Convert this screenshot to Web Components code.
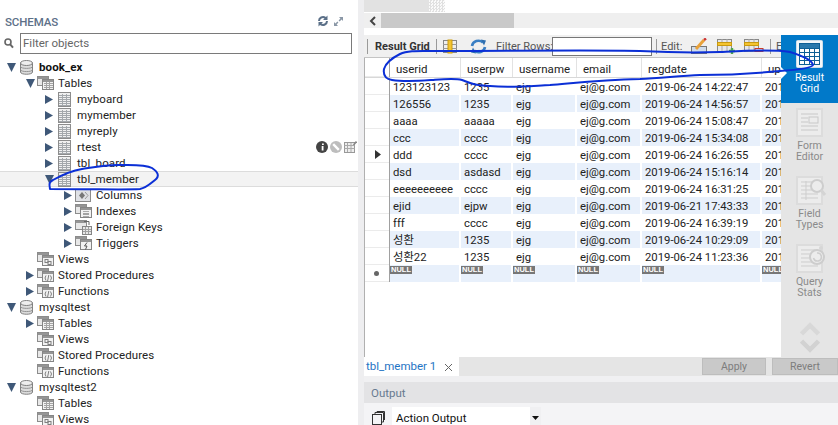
<!DOCTYPE html>
<html>
<head>
<meta charset="utf-8">
<title>MySQL Workbench</title>
<style>
  html, body { margin: 0; padding: 0; height: 425px; overflow: hidden; background: #fff; }
  body { font: 11.5px Roboto, "Noto Sans CJK KR", sans-serif; color: #111; }
</style>
</head>
<body>
<wb-app>
  <schema-panel slot="left">
    <tree-row arrow="open" icon="db" bold>book_ex</tree-row>
    <tree-row level="1" arrow="open" icon="tables">Tables</tree-row>
    <tree-row level="2" arrow="closed" icon="table">myboard</tree-row>
    <tree-row level="2" arrow="closed" icon="table">mymember</tree-row>
    <tree-row level="2" arrow="closed" icon="table">myreply</tree-row>
    <tree-row level="2" arrow="closed" icon="table" actions>rtest</tree-row>
    <tree-row level="2" arrow="closed" icon="table">tbl_board</tree-row>
    <tree-row level="2" arrow="open" icon="table" selected>tbl_member</tree-row>
    <tree-row level="3" arrow="closed" icon="columns">Columns</tree-row>
    <tree-row level="3" arrow="closed" icon="indexes">Indexes</tree-row>
    <tree-row level="3" arrow="closed" icon="fkeys">Foreign Keys</tree-row>
    <tree-row level="3" arrow="closed" icon="triggers">Triggers</tree-row>
    <tree-row level="1" icon="views">Views</tree-row>
    <tree-row level="1" arrow="closed" icon="procs">Stored Procedures</tree-row>
    <tree-row level="1" arrow="closed" icon="procs">Functions</tree-row>
    <tree-row arrow="open" icon="db">mysqltest</tree-row>
    <tree-row level="1" arrow="closed" icon="tables">Tables</tree-row>
    <tree-row level="1" icon="views">Views</tree-row>
    <tree-row level="1" icon="procs">Stored Procedures</tree-row>
    <tree-row level="1" icon="procs">Functions</tree-row>
    <tree-row arrow="open" icon="db">mysqltest2</tree-row>
    <tree-row level="1" icon="tables">Tables</tree-row>
    <tree-row level="1" icon="views">Views</tree-row>
  </schema-panel>
  <query-panel slot="right">
    <grid-toolbar slot="toolbar"></grid-toolbar>
    <data-grid slot="grid"></data-grid>
    <side-tabs slot="side">
      <side-tab icon="result" active>Result<br>Grid</side-tab>
      <side-tab icon="form">Form<br>Editor</side-tab>
      <side-tab icon="field">Field<br>Types</side-tab>
      <side-tab icon="stats">Query<br>Stats</side-tab>
    </side-tabs>
    <output-panel slot="output"></output-panel>
  </query-panel>
  <ink-marks slot="ink"></ink-marks>
</wb-app>

<script>
const TREE_ICONS = (() => {
  const back = '<rect x="0.5" y="0.5" width="11" height="9" fill="#e8e8e8" stroke="#8c8c8c"/><rect x="1" y="1" width="10" height="2" fill="#959595"/>';
  const front = '<rect x="5.5" y="3.5" width="11" height="10" fill="#f2f2f2" stroke="#858585"/><rect x="6" y="4" width="10" height="2" fill="#959595"/>';
  const stack = inner => `<svg width="17" height="15" viewBox="0 0 17 15">${back}${front}${inner}</svg>`;
  const tableLines = [3, 5, 7, 9, 11, 13].map(y => `M1 ${y + 0.5}H12`).join('') + 'M4.5 2V14M8.5 2V14';
  return {
    db: `<svg width="13" height="15" viewBox="0 0 13 15"><path d="M0.5 3V12C0.5 15 12.5 15 12.5 12V3Z" fill="#dcdcdc" stroke="#808080"/><ellipse cx="6.5" cy="3" rx="6" ry="2.5" fill="#eee" stroke="#808080"/><path d="M0.5 6.5C0.5 9 12.5 9 12.5 6.5M0.5 9.7C0.5 12.2 12.5 12.2 12.5 9.7" fill="none" stroke="#959595"/></svg>`,
    table: `<svg width="13" height="15" viewBox="0 0 13 15"><rect x="0.5" y="0.5" width="12" height="14" fill="#f0f0f0" stroke="#8c8c8c"/><path d="${tableLines}" stroke="#a4a8ac" fill="none"/></svg>`,
    tables: stack('<path d="M7 7.5H16M7 9.5H16M7 11.5H16M9.5 6V13M12.5 6V13" stroke="#a4a4a4" fill="none"/>'),
    views: stack('<rect x="8" y="7.5" width="3" height="3" fill="none" stroke="#808080"/><rect x="11" y="9.5" width="3" height="3" fill="none" stroke="#808080"/>'),
    procs: stack('<path d="M9 7.5L8 10L9 12.5M13.5 7.5L14.5 10L13.5 12.5M11.8 7L10.6 13" stroke="#808080" fill="none"/>'),
    columns: `<svg width="16" height="15" viewBox="0 0 16 15"><rect x="0.5" y="1.5" width="15" height="12" fill="#dfe1e5" stroke="#8c8c8c"/><path d="M7 4L10 7.5L7 11L4 7.5Z" fill="#777"/><path d="M10 4L13 7.5L10 11" fill="none" stroke="#999"/></svg>`,
    indexes: stack('<path d="M8 10H14" stroke="#555"/><path d="M8 7.5H14M8 12.5H14" stroke="#aaa"/>'),
    fkeys: `<svg width="17" height="15" viewBox="0 0 17 15">${back}<rect x="7.5" y="6.5" width="9" height="8" fill="#e8e8e8" stroke="#858585"/><path d="M8 9.5H16M8 11.5H16M10.5 7V14M13.5 7V14" stroke="#a0a0a0"/><path d="M9 1.5H14V5" stroke="#666" fill="none"/></svg>`,
    triggers: stack('<path d="M12 6.5L9.5 10H12L10.5 13.5" stroke="#555" fill="none"/>')
  };
})();

class WbApp extends HTMLElement {
  constructor() {
    super();
    this.attachShadow({mode: 'open'}).innerHTML = `
      <style>
        :host { display: grid; grid-template-columns: 358px 6px 474px; height: 425px; position: relative; overflow: hidden; }
        .split { background: #eeeef0; }
      </style>
      <slot name="left"></slot>
      <div class="split"></div>
      <slot name="right"></slot>
      <slot name="ink"></slot>
    `;
  }
}

class SchemaPanel extends HTMLElement {
  constructor() {
    super();
    this.attachShadow({mode: 'open'}).innerHTML = `
      <style>
        :host { display: flex; flex-direction: column; height: 425px; overflow: hidden; background: #fff; }
        .head { display: flex; align-items: center; height: 33px; flex: none; box-sizing: border-box; padding: 9px 15px 0 5px; }
        .title { font-size: 11.5px; font-weight: 500; color: #5d7088; flex: 1; padding-top: 1px; letter-spacing: -0.1px; }
        .head svg + svg { margin-left: 5px; }
        .filter { display: flex; align-items: center; height: 21px; flex: none; padding: 0 6px 0 4px; }
        .filter svg { margin-right: 6px; flex: none; }
        .input { flex: 1; height: 21px; box-sizing: border-box; border: 1px solid #7a7a7a; outline: 0; padding: 0 2px; color: #666; font-size: 11.5px; line-height: 19px; }
        .rows { margin-top: 5px; flex: none; }
      </style>
      <div class="head">
        <span class="title">SCHEMAS</span>
        <svg width="12" height="12" viewBox="0 0 12 12"><path d="M1 6A5 5 0 0 1 9 2L10.5 0.5V5H6L7.5 3.5A3 3 0 0 0 3 6ZM11 6A5 5 0 0 1 3 10L1.5 11.5V7H6L4.5 8.5A3 3 0 0 0 9 6Z" fill="#5b7088"/></svg>
        <svg width="9" height="9" viewBox="0 0 9 9"><path d="M5 0H9V4L7.6 2.6L5.6 4.4L4.6 3.4L6.4 1.4ZM4 9H0V5L1.4 6.4L3.4 4.6L4.4 5.6L2.6 7.6Z" fill="#8a97a6"/></svg>
      </div>
      <div class="filter">
        <svg width="10" height="11" viewBox="0 0 10 11"><circle cx="4" cy="4" r="3" fill="none" stroke="#666" stroke-width="1.6"/><path d="M6 6.2L9 9.7" stroke="#666" stroke-width="2"/></svg>
        <div class="input">Filter objects</div>
      </div>
      <div class="rows"><slot></slot></div>
    `;
  }
}

class TreeRow extends HTMLElement {
  constructor() {
    super();
    this.attachShadow({mode: 'open'});
  }

  connectedCallback() {
    const level = Number(this.getAttribute('level') || 0);
    const arrow = this.getAttribute('arrow');
    const arrows = {
      open: '<svg width="9" height="9" viewBox="0 0 9 9"><path d="M0 0H9L4.5 9Z" fill="#3f5878"/></svg>',
      closed: '<svg width="8" height="9" viewBox="0 0 8 9"><path d="M0 0L8 4.5L0 9Z" fill="#3f5878"/></svg>'
    };
    const actions = this.hasAttribute('actions') ? `
      <span class="actions">
        <svg width="12" height="12" viewBox="0 0 12 12"><circle cx="6" cy="6" r="6" fill="#444"/><path d="M6.6 5V9.5M6.9 2.4V4" stroke="#fff" stroke-width="1.8"/></svg>
        <svg width="12" height="12" viewBox="0 0 12 12"><circle cx="6" cy="6" r="6" fill="#bdbdbd"/><path d="M3.2 3.2L8.8 8.8" stroke="#fff" stroke-width="2.4"/></svg>
        <svg width="13" height="12" viewBox="0 0 13 12"><rect x="0.5" y="1.5" width="10" height="10" fill="#eee" stroke="#999"/><path d="M0.5 4.5H10.5M0.5 7.5H10.5M3.5 2V11M7 2V11" stroke="#aaa"/><path d="M9.500 4L12.500 0.500" stroke="#888" stroke-width="1.600"/></svg>
      </span>` : '';
    this.shadowRoot.innerHTML = `
      <style>
        :host { display: flex; align-items: center; height: 16px; box-sizing: border-box; padding-left: ${6 + level * 19}px; padding-right: 1px; white-space: nowrap; font-size: 11.5px; color: #222; letter-spacing: 0.1px; }
        :host([bold]) { font-weight: 700; color: #111; }
        :host([selected]) { background: #f3f3f3; box-shadow: inset 0 1px #dcdcdc, inset 0 -1px #dcdcdc; }
        .arrow { width: 14px; flex: none; display: flex; align-items: center; padding-left: 1px; box-sizing: border-box; }
        .icon { width: 19px; flex: none; display: flex; align-items: center; }
        :host([level="1"]) .icon { width: 21px; margin-left: -2px; }
        :host([level="3"]) .icon { width: 21px; margin-left: -2px; }
        .actions { margin-left: auto; display: flex; gap: 2px; align-items: center; }
        .label { position: relative; top: -0.5px; }
      </style>
      <span class="arrow">${arrows[arrow] || ''}</span>
      <span class="icon">${TREE_ICONS[this.getAttribute('icon')] || ''}</span>
      <span class="label"><slot></slot></span>
      ${actions}
    `;
  }
}

class QueryPanel extends HTMLElement {
  constructor() {
    super();
    this.attachShadow({mode: 'open'}).innerHTML = `
      <style>
        :host { display: flex; flex-direction: column; height: 425px; background: #fff; overflow: hidden; }
        .tabs { display: flex; height: 12px; flex: none; }
        .tab { width: 65px; background: #e2e2e2; }
        .hatch { width: 16px; background: repeating-conic-gradient(#e0e0e0 0 25%, #fafafa 0 50%) 0 0 / 3px 3px; }
        .scroll { display: flex; align-items: center; height: 15px; margin-top: 1px; flex: none; background: #efefef; padding-left: 5px; }
        .scroll svg { flex: none; }
        .thumb { width: 133px; height: 15px; margin-left: 4px; background: #c9c9c9; }
        .spacer { height: 7px; flex: none; }
        .middle { display: flex; height: 322px; flex: none; }
        .main { width: 417px; display: flex; flex-direction: column; flex: none; overflow: hidden; }
        .result { display: flex; height: 19px; flex: none; background: #e5e5e5; }
        .tname { display: flex; align-items: center; width: 95px; background: #fff; color: #1f74c4; font-size: 11.5px; padding: 0 0 2px 2px; box-sizing: border-box; }
        .tname svg { margin-left: 8px; margin-top: 3px; }
        .btn { height: 17px; margin-top: 1px; box-sizing: border-box; background: #c9c9c9; border: 1px solid #bdbdbd; color: #7d7d7d; font-size: 10.5px; text-align: center; line-height: 15px; }
        .gap { height: 6px; flex: none; background: #f0f0f2; }
      </style>
      <div class="tabs"><div class="tab"></div><div class="hatch"></div></div>
      <div class="scroll">
        <svg width="8" height="10" viewBox="0 0 8 10"><path d="M6 1L2 5L6 9" fill="none" stroke="#444" stroke-width="2"/></svg>
        <div class="thumb"></div>
      </div>
      <div class="spacer"></div>
      <div class="middle">
        <div class="main"><slot name="toolbar"></slot><slot name="grid"></slot></div>
        <slot name="side"></slot>
      </div>
      <div class="result">
        <div class="tname">tbl_member 1<svg width="9" height="9" viewBox="0 0 9 9"><path d="M1 1L8 8M8 1L1 8" stroke="#666"/></svg></div>
        <div class="btn" style="width:64px;margin-left:243px">Apply</div>
        <div class="btn" style="width:66px;margin-left:6px">Revert</div>
      </div>
      <div class="gap"></div>
      <slot name="output"></slot>
    `;
  }
}

class GridToolbar extends HTMLElement {
  constructor() {
    super();
    this.attachShadow({mode: 'open'}).innerHTML = `
      <style>
        :host { display: flex; align-items: center; height: 23px; flex: none; background: #f0f0f0; font-size: 11px; color: #444; white-space: nowrap; overflow: hidden; box-sizing: border-box; border-bottom: 1px solid #c4c4c4; }
        .sep { width: 1px; height: 15px; background: #9a9a9a; flex: none; }
        b { font-weight: 700; color: #333; font-size: 11px; margin-left: 7px; width: 61px; flex: none; }
        svg { flex: none; }
        .lbl { color: #555; flex: none; }
        .filter { width: 100px; height: 19px; box-sizing: border-box; background: #fff; border: 1px solid #777; flex: none; }
      </style>
      <span class="sep" style="margin-left:3px"></span>
      <b>Result Grid</b>
      <span class="sep"></span>
      <svg style="margin-left:6px" width="14" height="15" viewBox="0 0 14 15"><rect x="0.5" y="1.5" width="13" height="12" fill="#eee" stroke="#888"/><path d="M0 5.5H14M0 9.5H14" stroke="#999"/><rect x="5" y="1" width="4" height="13" fill="#f4c430" stroke="#c99a10"/></svg>
      <svg style="margin-left:13px" width="17" height="15" viewBox="0 0 17 15"><path d="M2 7A6.5 6 0 0 1 13 3.5" fill="none" stroke="#3a7fc4" stroke-width="2.6"/><path d="M15 8A6.5 6 0 0 1 4 11.5" fill="none" stroke="#3a7fc4" stroke-width="2.6"/><path d="M11 0.5L16 1.5L14 6.5ZM6 14.5L1 13.5L3 8.5Z" fill="#2f6fb0"/></svg>
      <span class="lbl" style="margin-left:9px;width:56px">Filter Rows:</span>
      <span class="filter"></span>
      <span class="sep" style="margin-left:4px"></span>
      <span class="lbl" style="margin-left:4px;width:25px">Edit:</span>
      <svg style="margin-left:5px" width="17" height="16" viewBox="0 0 17 16"><rect x="0.5" y="8.5" width="15" height="7" fill="#cfdcec" stroke="#777"/><path d="M5 11L13 2" stroke="#e9a23b" stroke-width="3"/><path d="M13 2L15 0.5" stroke="#c33" stroke-width="2.5"/></svg>
      <svg style="margin-left:9px" width="20" height="15" viewBox="0 0 20 15"><rect x="0.5" y="0.5" width="14" height="12" fill="#e8e8e8" stroke="#888"/><path d="M5 0V13M10 0V13" stroke="#aaa"/><rect x="0.5" y="3.5" width="14" height="3" fill="#f4c430" stroke="#c99a10"/><path d="M15 9V15M12 12H18" stroke="#4ca64c" stroke-width="2.4"/></svg>
      <svg style="margin-left:7px" width="20" height="15" viewBox="0 0 20 15"><rect x="0.5" y="0.5" width="14" height="12" fill="#e8e8e8" stroke="#888"/><path d="M5 0V13M10 0V13" stroke="#aaa"/><rect x="0.5" y="3.5" width="14" height="3" fill="#f4c430" stroke="#c99a10"/><rect x="11" y="9.5" width="8" height="3" fill="#fff" stroke="#c83a2a"/></svg>
      <span class="sep" style="margin-left:6px"></span>
      <span class="lbl" style="margin-left:5px">E</span>
    `;
  }
}

class DataGrid extends HTMLElement {
  constructor() {
    super();
    this.attachShadow({mode: 'open'});
  }

  connectedCallback() {
    const headers = ['userid', 'userpw', 'username', 'email', 'regdate', 'up'];
    const rows = [
      ['123123123', '1235', '14:22:47'],
      ['126556', '1235', '14:56:57'],
      ['aaaa', 'aaaaa', '15:08:47'],
      ['ccc', 'cccc', '15:34:08'],
      ['ddd', 'cccc', '16:26:55', true],
      ['dsd', 'asdasd', '15:16:14'],
      ['eeeeeeeeee', 'cccc', '16:31:25'],
      ['ejid', 'ejpw', '17:43:33', false, '2019-06-21'],
      ['fff', 'cccc', '16:39:19'],
      ['성환', '1235', '10:29:09'],
      ['성환22', '1235', '11:23:36']
    ];
    const rowHtml = rows.map(([id, pw, time, current, day]) => `
      <div class="row">
        <div class="mark">${current ? '<svg width="6" height="9" viewBox="0 0 6 9"><path d="M0 0L6 4.5L0 9Z" fill="#333"/></svg>' : ''}</div>
        <div class="cell">${id}</div><div class="cell">${pw}</div><div class="cell">ejg</div><div class="cell">ej@g.com</div>
        <div class="cell">${day || '2019-06-24'} ${time}</div><div class="cell">201</div>
      </div>`).join('');
    const nullCells = Array(6).fill('<div class="cell"><span class="null">NULL</span></div>').join('');
    this.shadowRoot.innerHTML = `
      <style>
        :host { display: block; flex: none; font-size: 11.3px; color: #222; box-sizing: border-box; border-left: 1px solid #b0b0b0; height: 299px; }
        .row, .head { display: grid; grid-template-columns: 25px 71px 52px 64px 65px 120px 20px; height: 17px; }
        .head { height: 20px; background: #fff; border-bottom: 1px solid #d8d8d8; box-sizing: border-box; }
        .head .cell { padding-left: 6px; height: 19px; line-height: 22px; box-shadow: inset -1px 0 #e2e2e2; font-size: 11.5px; }
        .row:nth-child(even) .cell { background: linear-gradient(to right, #e8f0fb calc(100% - 2px), #fff 0); }
        .mark, .corner { box-shadow: inset -1px 0 #a0a0a0, inset 0 -1px #ebebeb; display: flex; align-items: center; justify-content: center; }
        .cell { padding-left: 3px; height: 17px; line-height: 19px; overflow: hidden; white-space: nowrap; }
        .row:nth-child(even) .cell:last-child { background: #e8f0fb; }
        .nulls .cell { padding-left: 0; line-height: 0; padding-top: 1px; box-sizing: border-box; }
        .null { display: inline-block; width: 22px; height: 8px; background: #777; color: #fff; font: 700 7.5px/8px "Liberation Sans", sans-serif; text-align: center; overflow: hidden; }
        .dot { width: 5px; height: 5px; border-radius: 50%; background: #666; margin-left: -2px; }
      </style>
      <div class="head"><div class="corner"></div>${headers.map(h => `<div class="cell">${h}</div>`).join('')}</div>
      <div class="rows">
        ${rowHtml}
        <div class="row nulls"><div class="mark"><span class="dot"></span></div>${nullCells}</div>
      </div>
    `;
  }
}

class SideTabs extends HTMLElement {
  constructor() {
    super();
    this.attachShadow({mode: 'open'}).innerHTML = `
      <style>
        :host { display: flex; flex-direction: column; width: 57px; flex: none; background: #e5e5e5; }
        .chev { margin-top: auto; padding-bottom: 4px; display: flex; justify-content: center; }
      </style>
      <slot></slot>
      <div class="chev"><svg width="20" height="31" viewBox="0 0 20 31"><path d="M1.500 12L10 3.500L18.500 12" fill="none" stroke="#d8d8d8" stroke-width="4.500"/><path d="M1.500 19L10 27.500L18.500 19" fill="none" stroke="#d2d2d2" stroke-width="4.500"/></svg></div>
    `;
  }
}

class SideTab extends HTMLElement {
  constructor() {
    super();
    this.attachShadow({mode: 'open'});
  }

  connectedCallback() {
    const page = '<rect x="1" y="1" width="25" height="27" fill="#ececec" stroke="#dcdcdc" stroke-width="2"/>';
    const lines = 'M5 6H22M5 10H22M5 14H22M5 18H22M5 22H22';
    const icons = {
      result: '<rect x="0.5" y="0.5" width="26" height="27" rx="1" fill="#f4f7fa" stroke="#cfdde8"/><rect x="3.5" y="3.5" width="20" height="21" fill="#fff" stroke="#0f5f95"/><path d="M3 8.5H24M3 12.5H24M3 16.5H24M3 20.5H24M8.5 4V24M13.5 4V24M18.5 4V24" stroke="#0f5f95"/><rect x="4" y="4" width="19" height="4" fill="#2a78ac"/>',
      form: `${page}<path d="M5 6H22M5 10H12M5 14H12M5 18H22M5 22H22" stroke="#c8c8c8"/><rect x="13" y="9" width="9" height="6" fill="none" stroke="#c8c8c8"/>`,
      field: `${page}<path d="${lines}M10 5V24" stroke="#cdcdcd"/><circle cx="21" cy="10" r="6" fill="#ececec" stroke="#cdcdcd" stroke-width="2"/><path d="M25 14L29 19" stroke="#d4d4d4" stroke-width="3"/>`,
      stats: `${page}<path d="${lines}" stroke="#cdcdcd"/><circle cx="21" cy="13" r="7" fill="#ececec" stroke="#cdcdcd" stroke-width="2"/><path d="M21 9A4 4 0 1 1 17.5 14" fill="none" stroke="#cdcdcd" stroke-width="1.5"/><circle cx="25" cy="4" r="2" fill="#d6d6d6"/>`
    };
    this.shadowRoot.innerHTML = `
      <style>
        :host { display: flex; flex-direction: column; align-items: center; height: 68px; flex: none; box-sizing: border-box; padding-top: 5px; color: #8a8a8a; font-size: 10.5px; line-height: 10.5px; text-align: center; position: relative; }
        :host([active]) { background: #0179c9; color: #fff; }
        :host([active])::before { content: ""; position: absolute; left: 0; top: 32px; border-left: 6px solid #fff; border-top: 6px solid transparent; border-bottom: 6px solid transparent; }
        svg { flex: none; margin-bottom: 5px; overflow: visible; }
      </style>
      <svg width="27" height="28" viewBox="0 0 27 28">${icons[this.getAttribute('icon')]}</svg>
      <div><slot></slot></div>
    `;
  }
}

class OutputPanel extends HTMLElement {
  constructor() {
    super();
    this.attachShadow({mode: 'open'}).innerHTML = `
      <style>
        :host { display: block; flex: none; background: #f4f4f6; font-size: 11.5px; }
        .head { display: flex; align-items: center; height: 21px; background: #e3e3e5; color: #677a90; padding-left: 7px; font-size: 11.5px; }
        .dots { flex: 1; height: 7px; margin-left: 5px; background: radial-gradient(#b4b4b4 40%, transparent 45%) 0 0 / 2px 2px; }
        .bar { display: flex; align-items: flex-start; height: 22px; padding: 4px 0 0 8px; box-sizing: border-box; overflow: hidden; }
        .bar svg { flex: none; }
        .icon { margin-top: 4px; }
        .combo { display: flex; align-items: center; width: 149px; height: 22px; margin-left: 7px; background: #fff; box-sizing: border-box; padding-left: 4px; color: #111; justify-content: space-between; flex: none; }
        .drop { display: flex; align-items: center; justify-content: center; width: 11px; height: 22px; background: #f0f0f2; }
      </style>
      <div class="head">Output<span class="dots"></span></div>
      <div class="bar">
        <svg class="icon" width="13" height="14" viewBox="0 0 13 14"><rect x="0.5" y="3.5" width="9" height="10" fill="none" stroke="#333"/><path d="M3 3V1.5H11.5V11H10M5 1V0.5H12.5V9" fill="none" stroke="#333"/></svg>
        <div class="combo">Action Output<span class="drop"><svg width="7" height="4" viewBox="0 0 7 4"><path d="M0 0H7L3.5 4Z" fill="#111"/></svg></span></div>
      </div>
    `;
  }
}

class InkMarks extends HTMLElement {
  constructor() {
    super();
    this.attachShadow({mode: 'open'}).innerHTML = `
      <style>
        :host { display: block; position: absolute; inset: 0; pointer-events: none; }
        path { fill: none; stroke: #0b2fd6; stroke-width: 2; stroke-linecap: round; stroke-linejoin: round; }
      </style>
      <svg width="838" height="425" viewBox="0 0 838 425">
        <path d="M50 189C49 184 49 182 53 180C62 175 70 171 82 169C95 167 105 165 118 165C130 165 145 164 152 168C158 172 160 176 155 180C150 184 146 188 140 189C125 190 100 189 50 189Z"/>
        <path d="M437 51C420 51 408 50 400 54C392 58 386 62 384 69C383 75 386 79 392 80C405 82 418 81 432 80C445 79 455 78 462 80C470 83 475 86 490 86C510 88 530 86 550 85C575 83 600 80 640 79C660 78 680 76 700 75C730 75 760 73 780 71C795 70 812 68 813 65C812 60 803 56 790 52C770 49 740 51 720 52C690 53 660 52 640 51C600 50 500 51 437 51Z"/>
      </svg>
    `;
  }
}

customElements.define('wb-app', WbApp);
customElements.define('schema-panel', SchemaPanel);
customElements.define('tree-row', TreeRow);
customElements.define('query-panel', QueryPanel);
customElements.define('grid-toolbar', GridToolbar);
customElements.define('data-grid', DataGrid);
customElements.define('side-tabs', SideTabs);
customElements.define('side-tab', SideTab);
customElements.define('output-panel', OutputPanel);
customElements.define('ink-marks', InkMarks);
</script>
</body>
</html>
